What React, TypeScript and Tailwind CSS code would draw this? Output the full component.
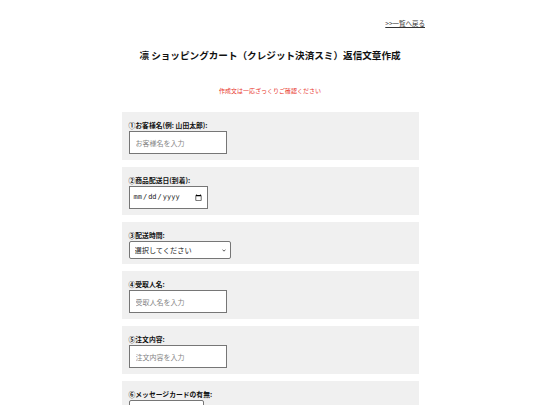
import React from "react";

const font = { fontFamily: '"Noto Sans CJK JP", "Noto Sans", sans-serif' };

function Section({ label, children, tight }: { label: string; children: React.ReactNode; tight?: boolean }) {
  return (
    <div className={tight ? "bg-[#f0f0f0] px-[7px] pt-[7px] pb-[5px]" : "bg-[#f0f0f0] px-[7px] pt-[7px] pb-[6px]"}>
      <div className="text-[6.8px] font-bold leading-[12px] text-[#111]">{label}</div>
      {children}
    </div>
  );
}

function TextInput({ placeholder }: { placeholder: string }) {
  return (
    <input
      type="text"
      placeholder={placeholder}
      className="block w-[98px] h-[23px] border border-[#767676] bg-white px-[6px] text-[7px] placeholder:text-[#858585] outline-none"
    />
  );
}

function Select({ width }: { width: string }) {
  return (
    <div className={`relative ${width} h-[18px]`}>
      <select
        className="appearance-none block w-full h-[18px] border border-[#767676] rounded-[2px] bg-white pl-[5px] pr-[12px] text-[7.2px] text-[#222] outline-none"
        defaultValue=""
      >
        <option value="">選択してください</option>
      </select>
      <svg
        className="absolute right-[5px] top-[7.5px] pointer-events-none"
        width="4"
        height="3"
        viewBox="0 0 4 3"
      >
        <path d="M0.5 0.6 L2 2.2 L3.5 0.6" fill="none" stroke="#333" strokeWidth="0.8" />
      </svg>
    </div>
  );
}

export default function App() {
  return (
    <div className="min-h-[405px] bg-white text-[#111]" style={font}>
      <div className="w-[310px] mx-auto text-right pt-[7px] h-[20px]">
        <a href="#" className="text-[6.5px] leading-[9px] underline text-[#333]">&gt;&gt;一覧へ戻る</a>
      </div>
      <h1 className="text-center text-[9.6px] font-bold leading-[14px] mt-[28px] text-[#111]">
        凛 ショッピングカート（クレジット決済スミ）返信文章作成
      </h1>
      <p className="text-center text-[6px] leading-[9px] text-[#e8352a] mt-[24px]">
        作成文は一応ざっくりご確認ください
      </p>
      <div className="w-[297px] mx-auto mt-[17px] flex flex-col gap-[7px]">
        <Section label="①お客様名(例: 山田太郎):">
          <TextInput placeholder="お客様名を入力" />
        </Section>
        <Section label="②商品配送日(到着):">
          <input
            type="date"
            className="block w-[79px] h-[23px] border border-[#767676] bg-white px-[3px] text-[7px] text-[#222]"
            style={{ fontFamily: '"DejaVu Sans Mono", monospace' }}
          />
        </Section>
        <Section label="③配送時間:" tight>
          <Select width="w-[102px]" />
        </Section>
        <Section label="④受取人名:">
          <TextInput placeholder="受取人名を入力" />
        </Section>
        <Section label="⑤注文内容:">
          <TextInput placeholder="注文内容を入力" />
        </Section>
        <Section label="⑥メッセージカードの有無:" tight>
          <Select width="w-[75px]" />
        </Section>
      </div>
    </div>
  );
}
